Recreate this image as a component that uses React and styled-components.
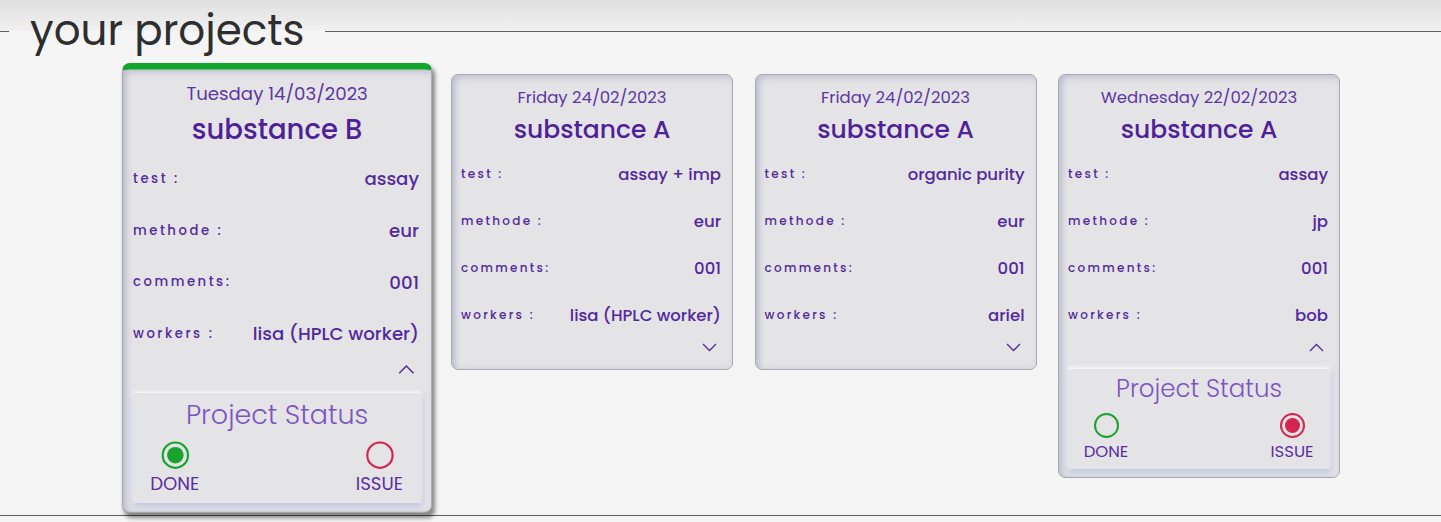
import React from 'react'
import styled, { createGlobalStyle } from 'styled-components'

const GlobalStyle = createGlobalStyle`
  body {
    margin: 0;
    background: #f5f5f5;
    font-family: Poppins, Inter, "Noto Sans", sans-serif;
  }
`

const Page = styled.div`
  min-height: 522px;
  padding-top: 6px;
  box-sizing: border-box;
  background: linear-gradient(to bottom, #e0e0e0 0, #f0f0f0 30px, #f5f5f5 31px);
`

const Section = styled.fieldset`
  margin: 0;
  padding: 18px 0 32px;
  border: none;
  border-top: 1px solid #5e5e5e;
  border-bottom: 1px solid #5e5e5e;
  min-width: 0;
`

const Legend = styled.legend`
  margin-left: 9px;
  padding: 0 21px;
  font-size: 42px;
  line-height: 50px;
  font-weight: 400;
  color: #2e2e2e;
`

const CardRow = styled.div`
  display: flex;
  align-items: flex-start;
  gap: 21.5px;
  padding-left: 147.5px;
`

const Card = styled.article`
  box-sizing: border-box;
  flex: none;
  width: 282px;
  display: flex;
  flex-direction: column;
  background: #e4e4e6;
  border: 1px solid #a9a9b1;
  border-top: ${p => (p.$active ? '6px solid #10a52b' : '1px solid #a9a9b1')};
  border-radius: 7px;
  box-shadow: inset 3px 2px 6px rgba(110, 110, 160, 0.35)
    ${p => (p.$active ? ', 2px 4px 4px rgba(0, 0, 0, 0.45)' : '')};
  transform: ${p => (p.$active ? 'translate(-26px, -11px) scale(1.1)' : 'none')};
  transform-origin: top left;
  color: #52299c;
`

const DateLine = styled.div`
  padding-top: 13px;
  text-align: center;
  font-size: 16.5px;
  line-height: 20px;
  color: #5c36a4;
`

const Title = styled.h3`
  margin: 7px 0 5.5px;
  text-align: center;
  font-size: 25px;
  line-height: 30px;
  font-weight: 500;
  color: #4f2199;
`

const Row = styled.div`
  height: 47px;
  padding: 0 11px 0 9px;
  display: flex;
  align-items: center;
  justify-content: space-between;
`

const Label = styled.span`
  font-size: 12px;
  letter-spacing: 2.3px;
  font-weight: 500;
`

const Value = styled.span`
  font-size: 16.5px;
  font-weight: 500;
`

const ChevronRow = styled.div`
  height: 30px;
  padding: 4px 15px 0 0;
  box-sizing: border-box;
  display: flex;
  justify-content: flex-end;
  align-items: flex-start;
  & svg {
    display: block;
  }
`

const StatusBox = styled.div`
  margin: 0 9px 8px;
  height: 100px;
  box-sizing: border-box;
  padding: 5px 8px 0;
  background: #e4e4e6;
  box-shadow: 0 -2px 3px rgba(255, 255, 255, 0.8), 1px 3px 6px rgba(120, 140, 215, 0.4);
`

const StatusTitle = styled.div`
  text-align: center;
  font-size: 24.5px;
  line-height: 30px;
  font-weight: 300;
  color: #7d55c2;
`

const Options = styled.div`
  margin-top: 9px;
  display: flex;
  justify-content: space-between;
`

const Option = styled.div`
  width: 60px;
  display: flex;
  flex-direction: column;
  align-items: center;
  gap: 5px;
`

const Radio = styled.span`
  box-sizing: border-box;
  width: 25px;
  height: 25px;
  border-radius: 50%;
  border: 2px solid ${p => p.$color};
  display: flex;
  align-items: center;
  justify-content: center;
  &::after {
    content: '';
    display: ${p => (p.$checked ? 'block' : 'none')};
    width: 15px;
    height: 15px;
    border-radius: 50%;
    background: ${p => p.$color};
  }
`

const OptionLabel = styled.span`
  font-size: 16.5px;
  line-height: 18px;
  color: #5a2ea3;
`

const Chevron = ({ up }) => (
  <svg width="15" height="9" viewBox="0 0 15 9" fill="none">
    <polyline
      points={up ? '1,8 7.5,1.5 14,8' : '1,1 7.5,7.5 14,1'}
      stroke="#52299c"
      strokeWidth="1.3"
    />
  </svg>
)

const projects = [
  {
    date: 'Tuesday 14/03/2023',
    substance: 'substance B',
    test: 'assay',
    methode: 'eur',
    comments: '001',
    workers: 'lisa (HPLC worker)',
    active: true,
    open: true,
    status: 'done'
  },
  {
    date: 'Friday 24/02/2023',
    substance: 'substance A',
    test: 'assay + imp',
    methode: 'eur',
    comments: '001',
    workers: 'lisa (HPLC worker)'
  },
  {
    date: 'Friday 24/02/2023',
    substance: 'substance A',
    test: 'organic purity',
    methode: 'eur',
    comments: '001',
    workers: 'ariel'
  },
  {
    date: 'Wednesday 22/02/2023',
    substance: 'substance A',
    test: 'assay',
    methode: 'jp',
    comments: '001',
    workers: 'bob',
    open: true,
    status: 'issue'
  }
]

const ProjectCard = ({ project }) => (
  <Card $active={project.active}>
    <DateLine>{project.date}</DateLine>
    <Title>{project.substance}</Title>
    <Row>
      <Label>test :</Label>
      <Value>{project.test}</Value>
    </Row>
    <Row>
      <Label>methode :</Label>
      <Value>{project.methode}</Value>
    </Row>
    <Row>
      <Label>comments:</Label>
      <Value>{project.comments}</Value>
    </Row>
    <Row>
      <Label>workers :</Label>
      <Value>{project.workers}</Value>
    </Row>
    <ChevronRow>
      <Chevron up={project.open} />
    </ChevronRow>
    {project.open && (
      <StatusBox>
        <StatusTitle>Project Status</StatusTitle>
        <Options>
          <Option>
            <Radio $color="#17a32e" $checked={project.status === 'done'} />
            <OptionLabel>DONE</OptionLabel>
          </Option>
          <Option>
            <Radio $color="#d4254f" $checked={project.status === 'issue'} />
            <OptionLabel>ISSUE</OptionLabel>
          </Option>
        </Options>
      </StatusBox>
    )}
  </Card>
)

const App = () => {
  return (
    <>
      <GlobalStyle />
      <Page>
        <Section>
          <Legend>your projects</Legend>
          <CardRow>
            {projects.map((p, i) => (
              <ProjectCard key={i} project={p} />
            ))}
          </CardRow>
        </Section>
      </Page>
    </>
  )
}

export default App
